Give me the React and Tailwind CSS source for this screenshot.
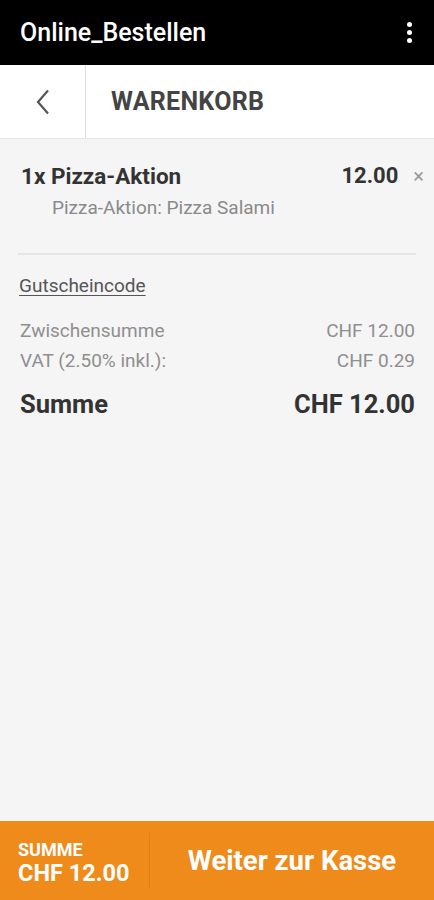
export default function App() {
  return (
    <div className="flex flex-col h-[900px] w-[434px] bg-[#f5f5f5] overflow-hidden" style={{ fontFamily: "Roboto, 'Noto Sans', sans-serif" }}>
      <div className="h-[65px] bg-black flex items-center justify-between pl-5 pr-[22px] shrink-0">
        <span className="text-white text-[25px] font-medium leading-[30px]">Online_Bestellen</span>
        <div className="flex flex-col gap-[3px] items-center">
          <span className="w-[5px] h-[5px] rounded-full bg-white" />
          <span className="w-[5px] h-[5px] rounded-full bg-white" />
          <span className="w-[5px] h-[5px] rounded-full bg-white" />
        </div>
      </div>
      <div className="h-[74px] bg-white flex border-b border-[#e6e6e6] shrink-0">
        <div className="w-[86px] flex items-center justify-center border-r border-[#dcdcdc]">
          <svg width="18" height="26" viewBox="0 0 18 26" fill="none">
            <path d="M14 1.5 L4 13 L14 24.5" stroke="#555" strokeWidth="2.2" />
          </svg>
        </div>
        <div className="flex items-center pl-[25px]">
          <span className="text-[25px] font-bold text-[#444] tracking-[0.3px] leading-[30px]">WARENKORB</span>
        </div>
      </div>
      <div className="flex-1 px-[18px]">
        <div className="pt-[23px] pb-[33px] border-b-2 border-[#e5e5e5]">
          <div className="flex items-center justify-between">
            <span className="text-[22.5px] font-bold text-[#333] pl-[3px] leading-[28px]">1x Pizza-Aktion</span>
            <div className="flex items-center">
              <span className="text-[22px] font-bold text-[#333] leading-[28px]">12.00</span>
              <span className="text-[#9a9a9a] text-[20px] ml-[15px] mr-[-8px] leading-[28px]">×</span>
            </div>
          </div>
          <div className="pl-[34px] mt-[6px] text-[19px] text-[#8a8a8a] leading-[24px]">Pizza-Aktion: Pizza Salami</div>
        </div>
        <div className="pt-[19px] pr-[1px]">
          <div className="text-[19px] text-[#555] underline underline-offset-[3px] leading-[24px] pl-[1px]">Gutscheincode</div>
          <div className="mt-[21px] flex justify-between text-[19px] text-[#8f8f8f] leading-[24px] pl-[2px]">
            <span>Zwischensumme</span><span>CHF 12.00</span>
          </div>
          <div className="mt-[6px] flex justify-between text-[19px] text-[#8f8f8f] leading-[24px] pl-[2px]">
            <span>VAT (2.50% inkl.):</span><span>CHF 0.29</span>
          </div>
          <div className="mt-[15px] flex justify-between text-[25.5px] font-bold text-[#333] leading-[32px] pl-[2px]">
            <span>Summe</span><span>CHF 12.00</span>
          </div>
        </div>
      </div>
      <div className="h-[79px] bg-[#ef8b1b] flex shrink-0">
        <div className="w-[149px] flex flex-col justify-center pl-[18px] pt-[4px]">
          <span className="text-white font-bold text-[18px] leading-[21px]">SUMME</span>
          <span className="text-white font-bold text-[23.5px] leading-[27px]">CHF 12.00</span>
        </div>
        <div className="w-[1px] bg-[#e0801a] my-[12px]" />
        <div className="flex-1 flex items-center justify-center">
          <span className="text-white font-bold text-[27.5px] leading-[32px]">Weiter zur Kasse</span>
        </div>
      </div>
    </div>
  );
}
